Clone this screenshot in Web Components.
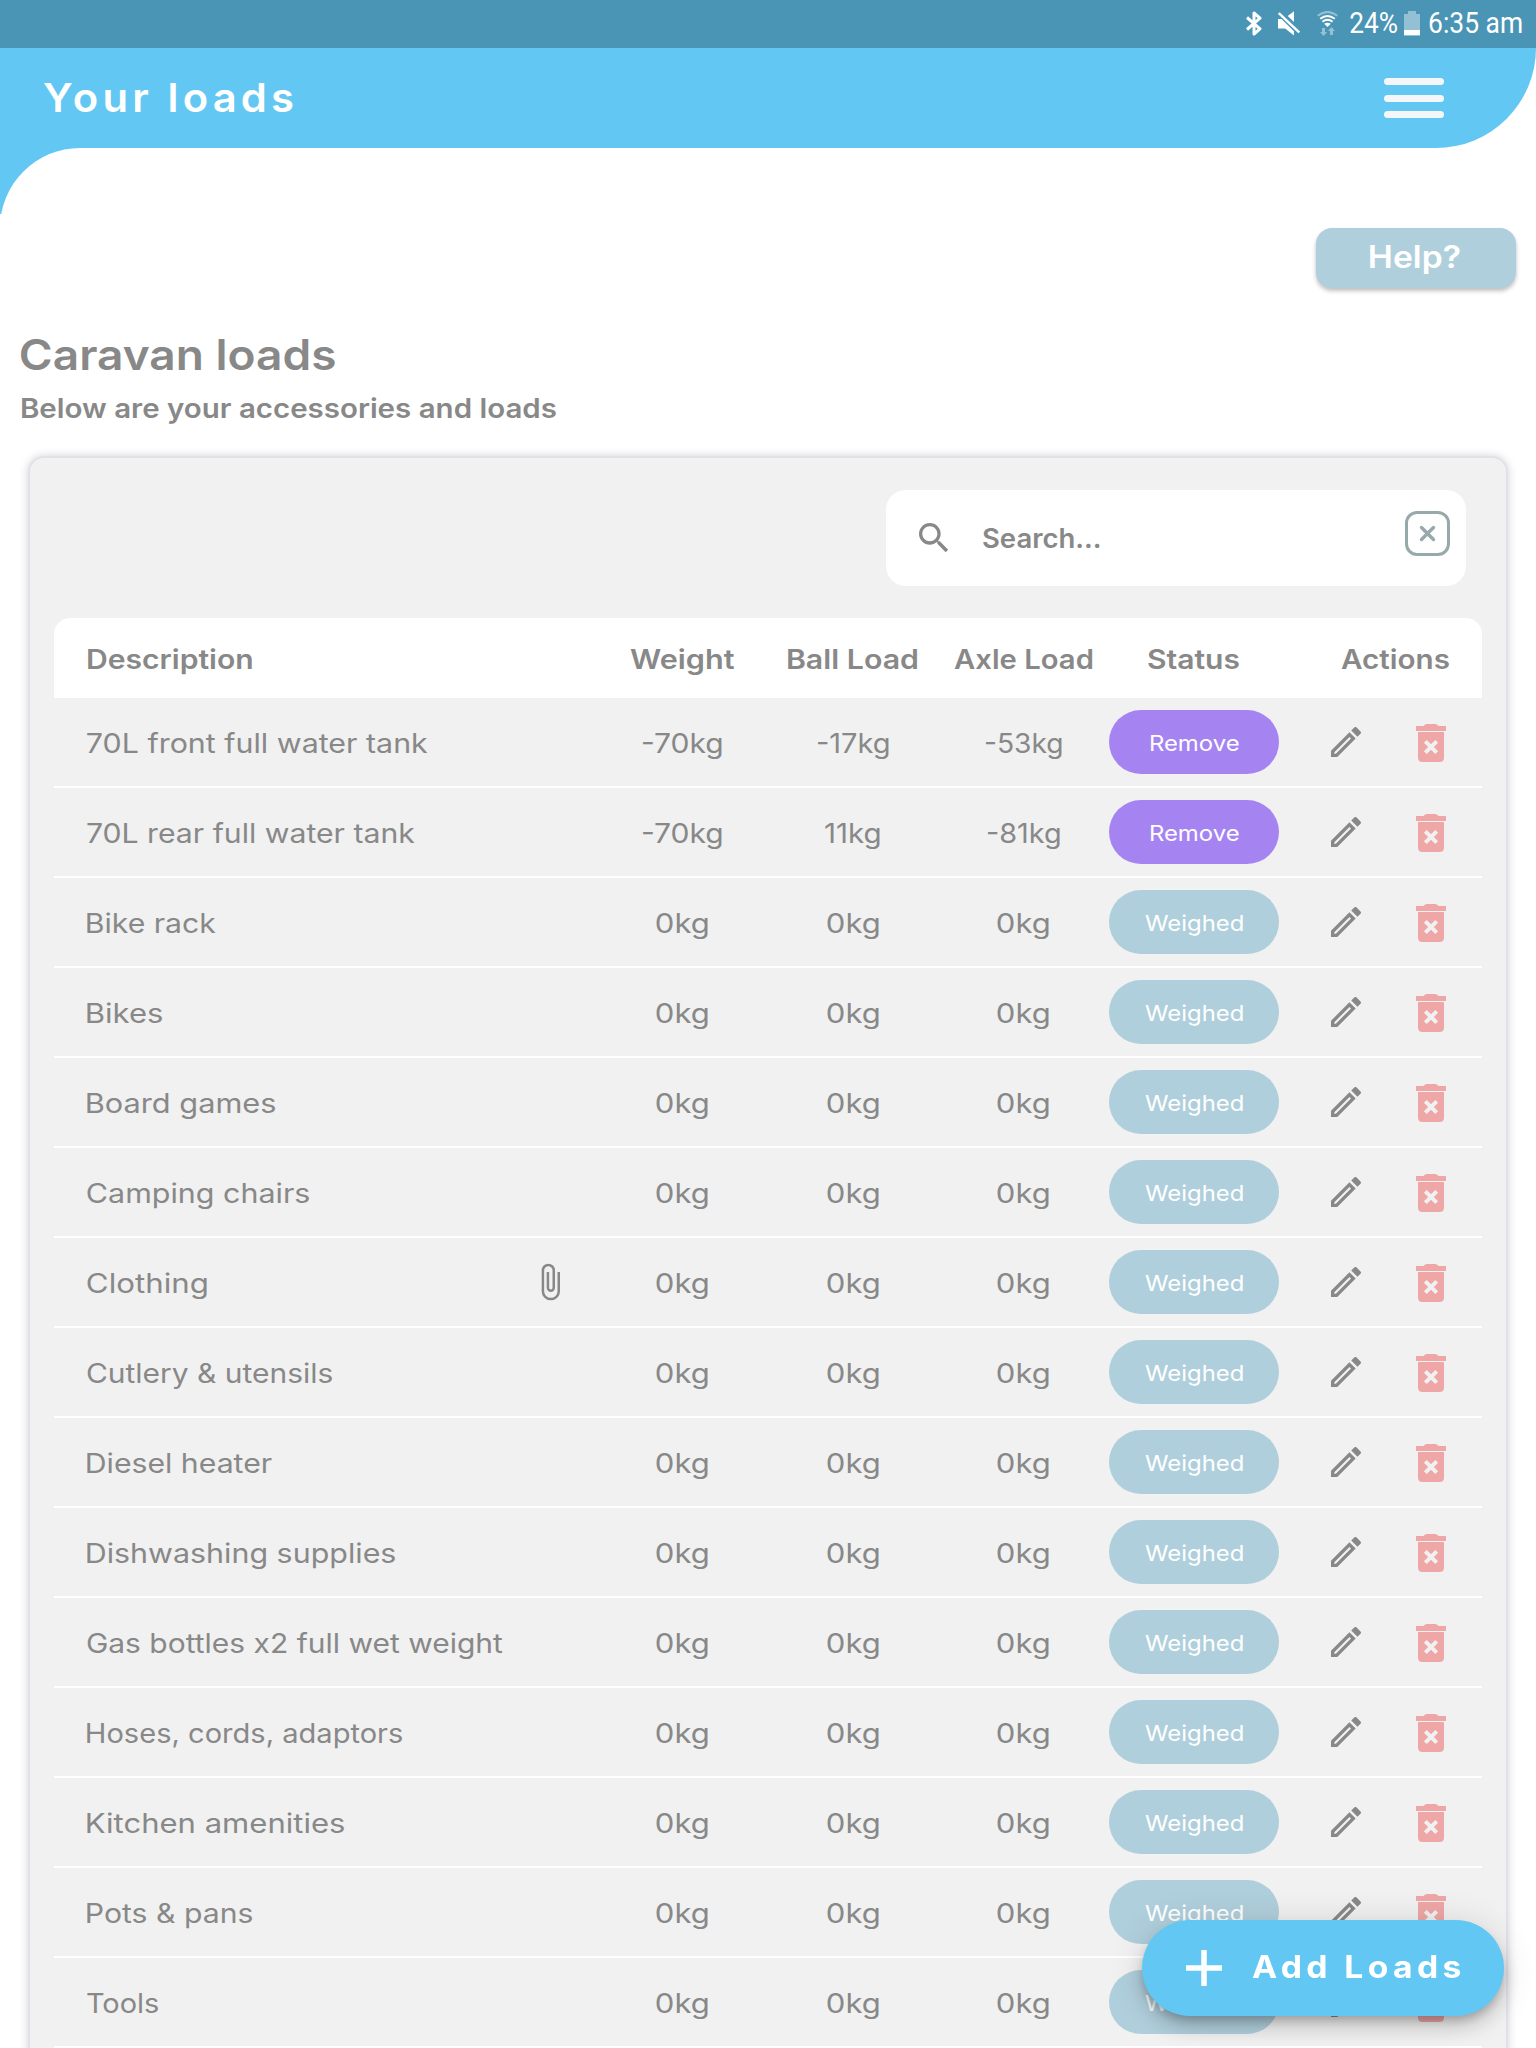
<!DOCTYPE html>
<html lang="en">
<head>
<meta charset="utf-8">
<title>Your loads</title>
<style>
  body {
    margin: 0;
    width: 1536px;
    height: 2048px;
    overflow: hidden;
    background: #fff;
    color: #888;
    font-family: Inter, "Liberation Sans", sans-serif;
  }
</style>
</head>
<body>
<loads-app></loads-app>
<script>
// One line of text whose glyphs are stretched to span exactly `w` pixels.
class FitText extends HTMLElement {
  constructor() {
    super();
    this.attachShadow({ mode: "open" });
    this.shadowRoot.innerHTML = `
      <style>
        :host { display: inline-flex; line-height: 1.2; flex: none; }
        span { display: block; flex: none; white-space: nowrap; transform-origin: 0 50%; }
      </style>
      <span><slot></slot></span>
    `;
  }

  connectedCallback() {
    const width = Number(this.getAttribute("w"));
    const style = getComputedStyle(this);
    const ctx = document.createElement("canvas").getContext("2d");
    ctx.font = `${style.fontWeight} ${style.fontSize} ${style.fontFamily}`;
    const text = this.textContent;
    const m = ctx.measureText(text);
    const spacing = (parseFloat(style.letterSpacing) || 0) * (text.length - 1);
    const ink = m.actualBoundingBoxRight + m.actualBoundingBoxLeft + spacing;
    const scale = width / ink;
    this.style.width = `${width}px`;
    this.shadowRoot.querySelector("span").style.transform =
      `translateX(${m.actualBoundingBoxLeft * scale}px) scaleX(${scale})`;
  }
}
customElements.define("fit-text", FitText);

class StatusBar extends HTMLElement {
  constructor() {
    super();
    this.attachShadow({ mode: "open" });
    this.shadowRoot.innerHTML = `
      <style>
        :host {
          display: flex;
          justify-content: flex-end;
          height: 48px;
          padding-right: 14px;
          box-sizing: border-box;
          background: #4a95b5;
          color: #fff;
          font: 400 30px/46px Roboto, sans-serif;
        }
        svg { display: block; margin-top: 11px; height: 25px; flex: none; }
        fit-text { line-height: 46px; }
      </style>
      <svg width="16" viewBox="0 0 16 25" fill="none" stroke="#fff" stroke-width="3" stroke-linejoin="round"><path d="M1 6.5l13 11.3-6 5.2V2l6 5.2L1 18.5"/></svg>
      <svg style="margin-left:16px" width="22" viewBox="0 0 22 25"><path fill="#fff" d="M0 8h3.5L16 20.3V24.500L7.2 17.5H0zM16 .3V11l-6.300-6z"/><path stroke="#fff" stroke-width="2.4" d="M.8 2l20.4 19.5"/></svg>
      <svg style="margin-left:17px" width="21" viewBox="0 0 21 25" fill="none" stroke="#fff" stroke-width="1.9"><path opacity=".42" d="M.7 4.8Q10.5-3 20.3 4.8"/><path d="M3.2 7.8q7.3-5.7 14.6 0M5.4 10.7q5.1-3.8 10.2 0"/><path fill="#fff" stroke="none" d="M7.2 12.7q3.3-2 6.6 0L10.5 16z"/><path fill="#fff" opacity=".42" stroke="none" d="M5 17h3v4h2l-3.3 4L3 21h2zM13 24v-4h-2l3.5-4L18 20h-2v4z"/></svg>
      <fit-text w="47" style="margin-left:12px">24%</fit-text>
      <svg style="margin-left:7px" width="16" viewBox="0 0 16 25"><path fill="#93c0d3" d="M0 3h4V0h8v3h4v22H0z"/><path fill="#fff" d="M0 19h16v5H0z"/></svg>
      <fit-text w="93" style="margin-left:9px">6:35 am</fit-text>
    `;
  }
}
customElements.define("status-bar", StatusBar);

class AppHeader extends HTMLElement {
  constructor() {
    super();
    this.attachShadow({ mode: "open" });
    this.shadowRoot.innerHTML = `
      <style>
        :host { display: block; height: 166px; }
        header {
          display: flex;
          align-items: center;
          justify-content: space-between;
          height: 100px;
          padding: 0 92px 0 43px;
          box-sizing: border-box;
          background: #62c7f2;
          border-bottom-right-radius: 100px;
          color: #fff;
          font-size: 40px;
          font-weight: 560;
          letter-spacing: 4px;
        }
        .menu { display: grid; gap: 9.5px; width: 60px; }
        .menu i { height: 7px; border-radius: 3.5px; background: #f5f6f8; }
        .curve { width: 80px; height: 65.5px; background: #62c7f2; overflow: hidden; }
        .curve div { height: 80px; background: #fff; border-top-left-radius: 80px; }
      </style>
      <header>
        <fit-text w="250">Your loads</fit-text>
        <div class="menu"><i></i><i></i><i></i></div>
      </header>
      <div class="curve"><div></div></div>
    `;
  }
}
customElements.define("app-header", AppHeader);

class SearchBox extends HTMLElement {
  constructor() {
    super();
    this.attachShadow({ mode: "open" });
    this.shadowRoot.innerHTML = `
      <style>
        :host {
          display: flex;
          align-items: center;
          width: 580px;
          height: 96px;
          padding: 0 16px 0 28px;
          box-sizing: border-box;
          border-radius: 20px;
          background: #fff;
          font-size: 27px;
          font-weight: 580;
        }
        fit-text { margin: 2px 0 0 29px; }
        .clear {
          display: grid;
          place-items: center;
          width: 45px;
          height: 45px;
          margin: 0 0 10px auto;
          box-sizing: border-box;
          border: 3px solid #98a9ac;
          border-radius: 12px;
        }
      </style>
      <svg width="40" height="40" viewBox="0 0 24 24" fill="#888"><path d="M9.5,3A6.5,6.5 0 0,1 16,9.5C16,11.11 15.41,12.59 14.44,13.73L14.71,14H15.5L20.5,19L19,20.5L14,15.5V14.71L13.73,14.44C12.59,15.41 11.11,16 9.5,16A6.5,6.5 0 0,1 3,9.5A6.5,6.5 0 0,1 9.5,3M9.5,5C7,5 5,7 5,9.5C5,12 7,14 9.5,14C12,14 14,12 14,9.5C14,7 12,5 9.5,5Z"/></svg>
      <fit-text w="117">Search...</fit-text>
      <div class="clear">
        <svg width="17" height="17" viewBox="0 0 17 17" stroke="#98a9ac" stroke-width="3.4" stroke-linecap="round"><path d="M2.5 2.5l12 12m0-12l-12 12"/></svg>
      </div>
    `;
  }
}
customElements.define("search-box", SearchBox);

class LoadRow extends HTMLElement {
  constructor() {
    super();
    this.attachShadow({ mode: "open" });
  }

  set load([name, nameWidth, cells, remove, attachment]) {
    this.shadowRoot.innerHTML = `
      <style>
        :host {
          display: grid;
          grid-template-columns: 542.7px repeat(4, 170.67px) 1fr;
          grid-template-rows: 88px;
          align-items: center;
          height: 90px;
          box-sizing: border-box;
          border-bottom: 2px solid #fff;
          font-size: 27px;
          font-weight: 430;
        }
        .name { display: flex; align-items: center; justify-content: space-between; padding: 0 27px 0 33px; }
        .name fit-text { margin-top: 4px; }
        .cell { display: flex; justify-content: center; padding-top: 4px; }
        .pill {
          display: flex;
          justify-content: center;
          align-items: center;
          height: 64px;
          padding-top: 4px;
          box-sizing: border-box;
          border-radius: 32px;
          background: #b0cfdc;
          color: #fff;
          font-size: 21.5px;
          font-weight: 380;
        }
        .pill.remove { background: #a584f2; padding-left: 2px; }
        .actions { display: grid; grid-template-columns: 85.33px 85.33px; padding-left: 24px; place-items: center; }
        svg { display: block; }
      </style>
      <div class="name">
        <fit-text w="${nameWidth}">${name}</fit-text>
        ${attachment ? `<svg width="40" height="40" viewBox="0 0 24 24" fill="#888"><path d="M16.5,6V17.5A4,4 0 0,1 12.5,21.5A4,4 0 0,1 8.5,17.5V5A2.5,2.5 0 0,1 11,2.5A2.5,2.5 0 0,1 13.5,5V15.5A1,1 0 0,1 12.5,16.5A1,1 0 0,1 11.5,15.5V6H10V15.5A2.5,2.5 0 0,0 12.5,18A2.5,2.5 0 0,0 15,15.5V5A4,4 0 0,0 11,1A4,4 0 0,0 7,5V17.5A5.5,5.5 0 0,0 12.5,23A5.5,5.5 0 0,0 18,17.5V6H16.5Z"/></svg>` : ""}
      </div>
      ${cells.map(([text, width]) => `<div class="cell"><fit-text w="${width}">${text}</fit-text></div>`).join("")}
      <div class="pill ${remove ? "remove" : ""}">${remove ? '<fit-text w="89">Remove</fit-text>' : '<fit-text w="98">Weighed</fit-text>'}</div>
      <div class="actions">
        <svg width="40" height="40" viewBox="0 0 24 24" fill="#888"><path d="M14.06,9L15,9.94L5.92,19H5V18.08L14.06,9M17.66,3C17.41,3 17.15,3.1 16.96,3.29L15.13,5.12L18.88,8.87L20.71,7.04C21.1,6.65 21.1,6 20.71,5.63L18.37,3.29C18.17,3.09 17.92,3 17.66,3M14.06,6.19L3,17.25V21H6.75L17.81,9.94L14.06,6.19Z"/></svg>
        <svg width="30" height="38" viewBox="0 0 30 38" style="margin-top:2px"><path fill="#eea7a6" d="M0 2h7.5q1.5-2 3.5-2h8q2 0 3.5 2H30v5H0zM2 8h26v25.5q0 4.5-4.5 4.5h-17Q2 38 2 33.5z"/><path stroke="#f1f1f1" stroke-width="4" d="M9.3 17.3l11.4 11.4m0-11.4L9.3 28.7"/></svg>
      </div>
    `;
  }
}
customElements.define("load-row", LoadRow);

// [name, name width, [weight, ball load, axle load], marked for removal, has attachment]
const zero = [["0kg", 52], ["0kg", 52], ["0kg", 52]];
const loads = [
  ["70L front full water tank", 341, [["-70kg", 80], ["-17kg", 72], ["-53kg", 77]], true],
  ["70L rear full water tank", 328, [["-70kg", 80], ["11kg", 55], ["-81kg", 73]], true],
  ["Bike rack", 129, zero],
  ["Bikes", 75, zero],
  ["Board games", 188, zero],
  ["Camping chairs", 222, zero],
  ["Clothing", 120, zero, false, true],
  ["Cutlery &amp; utensils", 245, zero],
  ["Diesel heater", 185, zero],
  ["Dishwashing supplies", 308, zero],
  ["Gas bottles x2 full wet weight", 416, zero],
  ["Hoses, cords, adaptors", 315, zero],
  ["Kitchen amenities", 257, zero],
  ["Pots &amp; pans", 165, zero],
  ["Tools", 71, zero],
];

class LoadTable extends HTMLElement {
  constructor() {
    super();
    this.attachShadow({ mode: "open" });
    this.shadowRoot.innerHTML = `
      <style>
        :host { display: block; }
        .head {
          display: grid;
          grid-template-columns: 542.7px repeat(4, 170.67px) 1fr;
          align-items: center;
          height: 80px;
          padding-top: 5px;
          box-sizing: border-box;
          border-radius: 16px 16px 0 0;
          background: #fff;
          font-size: 27px;
          font-weight: 570;
          justify-items: center;
        }
        .head :first-child { justify-self: start; margin-left: 33px; }
        .head :last-child { justify-self: end; margin-right: 33px; }
      </style>
      <div class="head">
        <fit-text w="165">Description</fit-text>
        <fit-text w="105">Weight</fit-text>
        <fit-text w="131">Ball Load</fit-text>
        <fit-text w="139">Axle Load</fit-text>
        <fit-text w="91">Status</fit-text>
        <fit-text w="108">Actions</fit-text>
      </div>
    `;
  }

  connectedCallback() {
    for (const load of loads) {
      const row = document.createElement("load-row");
      this.shadowRoot.append(row);
      row.load = load;
    }
  }
}
customElements.define("load-table", LoadTable);

class AddButton extends HTMLElement {
  constructor() {
    super();
    this.attachShadow({ mode: "open" });
    this.shadowRoot.innerHTML = `
      <style>
        :host {
          position: fixed;
          left: 1142px;
          top: 1920px;
          display: flex;
          align-items: center;
          gap: 30px;
          width: 362px;
          height: 96px;
          padding-left: 44px;
          box-sizing: border-box;
          border-radius: 48px;
          background: #62c7f2;
          box-shadow: 0 6px 10px -2px rgba(0, 0, 0, .2), 0 12px 20px rgba(0, 0, 0, .14), 0 2px 36px rgba(0, 0, 0, .12);
          color: #fff;
          font-size: 31px;
          font-weight: 700;
          letter-spacing: 4px;
        }
        fit-text { margin-bottom: 2px; }
      </style>
      <svg width="36" height="36" viewBox="0 0 36 36" stroke="#fff" stroke-width="5.5"><path d="M18 0v36M0 18h36"/></svg>
      <fit-text w="209">Add Loads</fit-text>
    `;
  }
}
customElements.define("add-button", AddButton);

class LoadsApp extends HTMLElement {
  constructor() {
    super();
    this.attachShadow({ mode: "open" });
    this.shadowRoot.innerHTML = `
      <style>
        :host { display: block; }
        .help {
          display: flex;
          align-items: center;
          justify-content: center;
          width: 200px;
          height: 60px;
          margin: 14px 20px 0 auto;
          padding: 0 2px 2px 0;
          box-sizing: border-box;
          border-radius: 16px;
          background: #b0cfdc;
          box-shadow: 0 3px 4px rgba(0, 0, 0, .25);
          color: #fff;
          font-size: 31px;
          font-weight: 600;
        }
        .titles { display: flex; flex-direction: column; height: 168px; padding: 40px 0 0 21px; box-sizing: border-box; }
        h1, h2 { display: flex; margin: 0; font-weight: 570; }
        h1 { font-size: 42.5px; line-height: 54px; }
        h2 { font-size: 27px; line-height: 54px; }
        h1 fit-text, h2 fit-text { line-height: inherit; }
        .panel {
          margin: 0 28px;
          padding: 32px 24px 20px;
          border: 2px solid #dfe3e8;
          border-radius: 16px;
          background: #f1f1f1;
          box-shadow: 0 0 10px rgba(0, 0, 0, .18);
        }
        search-box { margin: 0 16px 32px auto; }
      </style>
      <status-bar></status-bar>
      <app-header></app-header>
      <main>
        <div class="help"><fit-text w="90">Help?</fit-text></div>
        <div class="titles">
          <h1><fit-text w="314">Caravan loads</fit-text></h1>
          <h2><fit-text w="535">Below are your accessories and loads</fit-text></h2>
        </div>
        <section class="panel">
          <search-box></search-box>
          <load-table></load-table>
        </section>
      </main>
      <add-button></add-button>
    `;
  }
}
customElements.define("loads-app", LoadsApp);
</script>
</body>
</html>
